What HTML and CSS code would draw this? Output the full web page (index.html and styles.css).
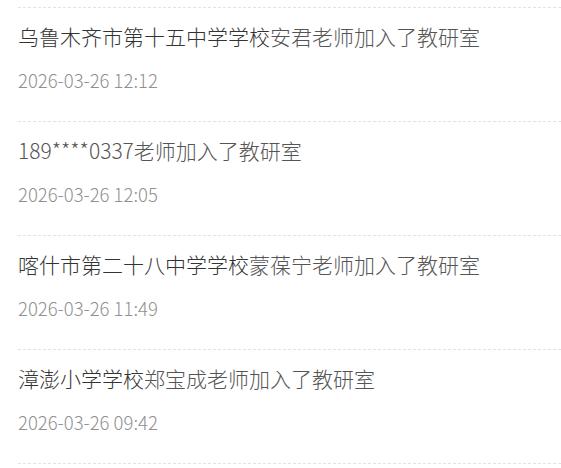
FILE: index.html
```html
<!DOCTYPE html>
<html lang="zh-CN">
    <head>
        <meta charset="UTF-8" />
        <meta name="viewport" content="width=device-width, initial-scale=1.0" />
        <title>教研室动态</title>
        <link rel="stylesheet" href="styles.css">
    </head>
    <body>
        <ul class="feed">
            <li class="item">
                <p class="title"><span class="school">乌鲁木齐市第十五中学学校</span>安君老师加入了教研室</p>
                <p class="time">2026-03-26 12:12</p>
            </li>
            <li class="item">
                <p class="title">189****0337老师加入了教研室</p>
                <p class="time">2026-03-26 12:05</p>
            </li>
            <li class="item">
                <p class="title"><span class="school">喀什市第二十八中学学校</span>蒙葆宁老师加入了教研室</p>
                <p class="time">2026-03-26 11:49</p>
            </li>
            <li class="item">
                <p class="title"><span class="school">漳澎小学学校</span>郑宝成老师加入了教研室</p>
                <p class="time">2026-03-26 09:42</p>
            </li>
        </ul>
    </body>
</html>
```

FILE: styles.css
```css
body {
    margin: 0;
    background-color: #fff;
    font-family: "Noto Sans CJK SC", "Noto Sans", sans-serif;
}
.feed {
    list-style: none;
    margin: 0;
    padding: 7px 0 0 18px;
}
.item {
    border-top: 1px dashed #e2e2e6;
    padding: 14px 0 30px;
}
.item:last-child {
    border-bottom: 1px dashed #e2e2e6;
}
.title {
    margin: 0;
    font-size: 21px;
    font-weight: 300;
    line-height: 28px;
    color: #555;
}
.school {
    color: #333;
}
.time {
    margin: 19px 0 0;
    font-size: 18.5px;
    font-weight: 300;
    line-height: 22px;
    color: #909090;
}
```
